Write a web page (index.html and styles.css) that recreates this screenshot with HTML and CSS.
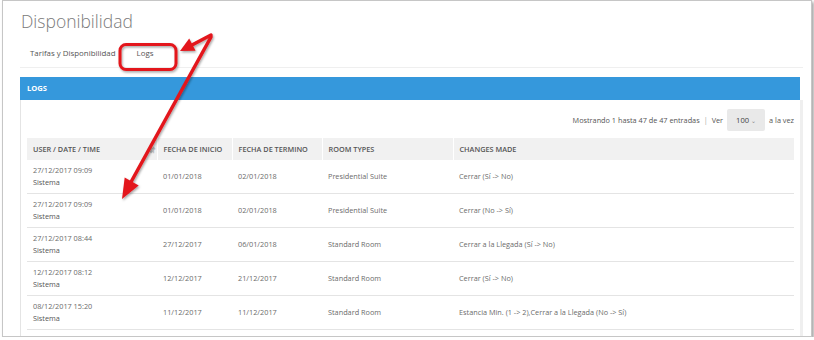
FILE: index.html
```html
<!DOCTYPE html>
<html lang="es">
<head>
  <meta charset="UTF-8">
  <title>Disponibilidad</title>
  <link rel="stylesheet" href="styles.css">
</head>
<body>
  <div class="window">
    <div class="page">
      <h1 class="title">Disponibilidad</h1>

      <div class="tabs">
        <span class="tab">Tarifas y Disponibilidad</span>
        <span class="tab active">Logs</span>
      </div>

      <div class="panel">
        <div class="panel-heading">LOGS</div>
        <div class="panel-body">
          <div class="table-info">
            Mostrando 1 hasta 47 de 47 entradas
            <span class="sep">|</span> Ver
            <span class="page-size">100 <span class="caret">&#8964;</span></span>
            a la vez
          </div>

          <table class="logs">
            <thead>
              <tr>
                <th class="col-user">USER / DATE / TIME <span class="sort">&#8693;</span></th>
                <th class="col-start">FECHA DE INICIO</th>
                <th class="col-end">FECHA DE TERMINO</th>
                <th class="col-room">ROOM TYPES</th>
                <th class="col-changes">CHANGES MADE</th>
              </tr>
            </thead>
            <tbody>
              <tr>
                <td>27/12/2017 09:09<br><span class="who">Sistema</span></td>
                <td>01/01/2018</td>
                <td>02/01/2018</td>
                <td>Presidential Suite</td>
                <td>Cerrar (Sí -&gt; No)</td>
              </tr>
              <tr>
                <td>27/12/2017 09:09<br><span class="who">Sistema</span></td>
                <td>01/01/2018</td>
                <td>02/01/2018</td>
                <td>Presidential Suite</td>
                <td>Cerrar (No -&gt; Sí)</td>
              </tr>
              <tr>
                <td>27/12/2017 08:44<br><span class="who">Sistema</span></td>
                <td>27/12/2017</td>
                <td>06/01/2018</td>
                <td>Standard Room</td>
                <td>Cerrar a la Llegada (Sí -&gt; No)</td>
              </tr>
              <tr>
                <td>12/12/2017 08:12<br><span class="who">Sistema</span></td>
                <td>12/12/2017</td>
                <td>21/12/2017</td>
                <td>Standard Room</td>
                <td>Cerrar (Sí -&gt; No)</td>
              </tr>
              <tr>
                <td>08/12/2017 15:20<br><span class="who">Sistema</span></td>
                <td>11/12/2017</td>
                <td>11/12/2017</td>
                <td>Standard Room</td>
                <td>Estancia Min. (1 -&gt; 2),Cerrar a la Llegada (No -&gt; Sí)</td>
              </tr>
            </tbody>
          </table>
        </div>
      </div>
    </div>

    <!-- annotation drawn over the screenshot -->
    <svg class="annotation" width="810" height="337" viewBox="0 0 810 337">
      <defs>
        <filter id="shadow" x="-20%" y="-20%" width="140%" height="140%">
          <feDropShadow dx="1" dy="1.5" stdDeviation="1" flood-color="#000" flood-opacity="0.35"/>
        </filter>
      </defs>
      <g transform="translate(-2 0)" filter="url(#shadow)">
        <rect x="119" y="44.5" width="56" height="25" rx="6" fill="none" stroke="#e3161c" stroke-width="3"/>
        <line x1="210" y1="35" x2="191" y2="45" stroke="#e3161c" stroke-width="3.5" stroke-linecap="round"/>
        <polygon points="179,51 194.6,50.8 188.2,38.4" fill="#e3161c"/>
        <line x1="210" y1="37" x2="130" y2="182" stroke="#e3161c" stroke-width="3.5" stroke-linecap="round"/>
        <polygon points="121,199 137.7,185.4 123.7,177.6" fill="#e3161c"/>
      </g>
    </svg>
  </div>
</body>
</html>
```

FILE: styles.css
```css
body {
  margin: 0;
  background: #fff;
  font-family: "Open Sans", Arial, sans-serif;
  color: #666;
}

.window {
  position: relative;
  margin-left: 2px;
  width: 808px;
  height: 335px;
  border: 1px solid #c6c6c6;
  box-shadow: 2px 2px 3px rgba(0, 0, 0, 0.35);
  overflow: hidden;
  background: #fff;
}

.page {
  padding: 0 8px 0 17px;
}

.title {
  margin: 0;
  padding: 8px 0 0 1px;
  font-size: 17.5px;
  font-weight: 300;
  line-height: 24px;
  color: #7a7a7a;
}

.tabs {
  display: flex;
  margin-top: 12px;
  border-bottom: 1px solid #efefef;
  height: 22px;
}

.tab {
  font-size: 7.9px;
  color: #555;
  padding: 0 0 0 10px;
  line-height: 16px;
}

.tab.active {
  position: relative;
  margin-left: 11px;
  padding: 0 10px 0 10px;
}

.tab.active::after {
  content: "";
  position: absolute;
  left: 0;
  right: -1px;
  bottom: -3px;
  height: 2px;
  background: #e3474c;
}

.panel {
  margin-top: 9px;
}

.panel-heading {
  background: #3598dc;
  color: #fff;
  font-weight: 700;
  font-size: 7.6px;
  height: 23px;
  line-height: 23px;
  padding-left: 7px;
  width: 773px;
}

.panel-body {
  border-left: 1px solid #e4e4e4;
  border-right: 3px solid #efefef;
  padding: 9px 6px 10px 6px;
  width: 767px;
}

.table-info {
  display: flex;
  justify-content: flex-end;
  align-items: center;
  gap: 3px;
  font-size: 7.3px;
  color: #555;
  height: 22px;
}

.sep {
  color: #aaa;
  margin: 0 1px;
}

.page-size {
  background: #e9e9e9;
  border-radius: 2px;
  width: 38px;
  height: 22px;
  line-height: 22px;
  text-align: center;
  font-size: 7.6px;
  color: #444;
  margin: 0 1px;
}

.caret {
  font-size: 6px;
  color: #888;
}

.logs {
  margin-top: 7px;
  width: 767px;
  table-layout: fixed;
  border-collapse: collapse;
  font-size: 7.3px;
}

.logs th {
  box-sizing: border-box;
  background: #f1f1f1;
  color: #555;
  font-weight: 600;
  text-align: left;
  height: 22px;
  padding: 0 6px;
  border-left: 1px solid #fff;
  position: relative;
}

.logs th:first-child {
  border-left: none;
}

.col-user { width: 130px; }
.col-start { width: 75px; }
.col-end { width: 90px; }
.col-room { width: 131px; }

.sort {
  position: absolute;
  right: 1px;
  top: 6px;
  color: #bbb;
  font-size: 8px;
}

.logs td {
  height: 33px;
  padding: 0 6px;
  border-bottom: 1px solid #e4e4e4;
  color: #6b6b6b;
  line-height: 11.5px;
  vertical-align: middle;
}

.who {
  color: #555;
}

.annotation {
  position: absolute;
  left: 0;
  top: -1px;
  pointer-events: none;
}
```
